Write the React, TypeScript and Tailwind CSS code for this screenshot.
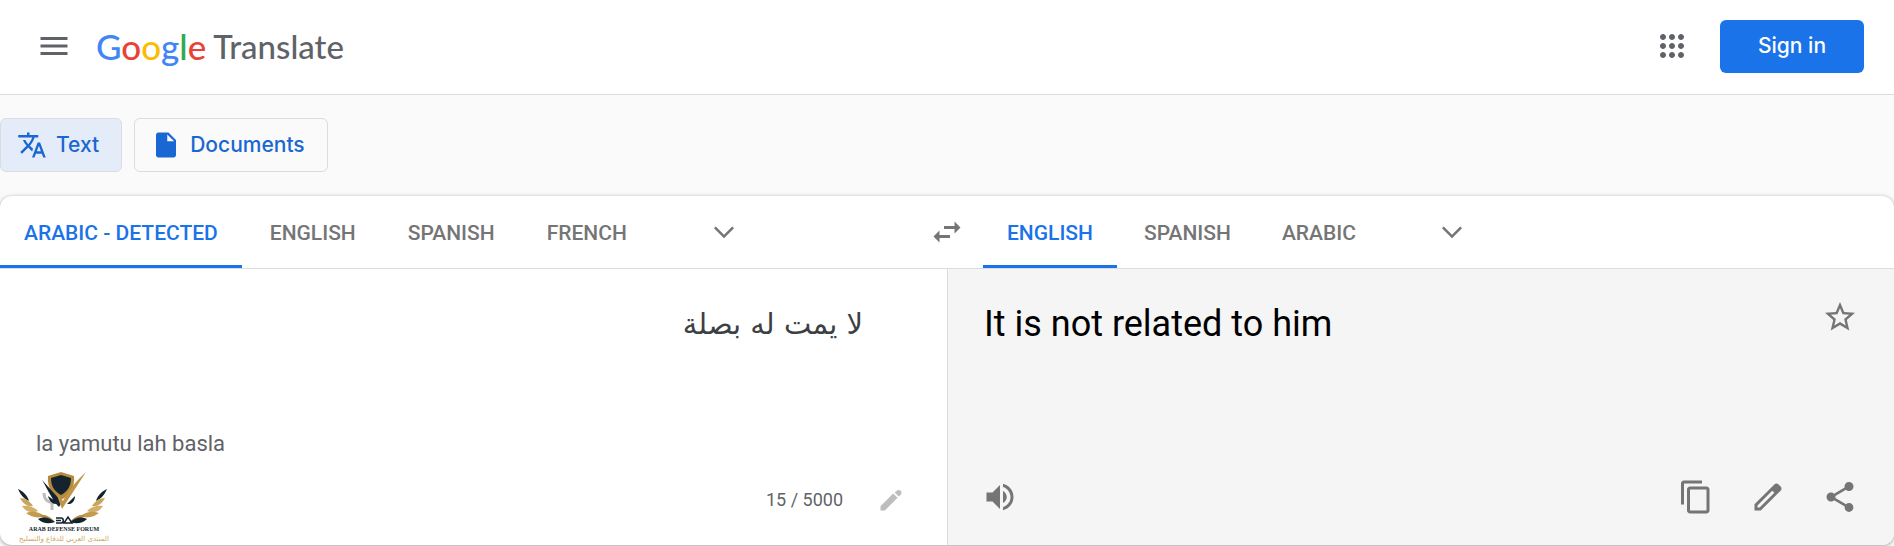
import React from "react";
import clsx from "clsx";

type IconProps = { d: string; className?: string };

const Icon = ({ d, className }: IconProps) => (
  <svg viewBox="0 0 24 24" fill="currentColor" aria-hidden="true" className={clsx("shrink-0", className ?? "size-9")}>
    <path d={d} />
  </svg>
);

const icons = {
  menu: "M3 18h18v-2H3v2zm0-5h18v-2H3v2zm0-7v2h18V6H3z",
  apps: "M6 8c1.1 0 2-.9 2-2s-.9-2-2-2-2 .9-2 2 .9 2 2 2zm6 12c1.1 0 2-.9 2-2s-.9-2-2-2-2 .9-2 2 .9 2 2 2zm-6 0c1.1 0 2-.9 2-2s-.9-2-2-2-2 .9-2 2 .9 2 2 2zm0-6c1.1 0 2-.9 2-2s-.9-2-2-2-2 .9-2 2 .9 2 2 2zm6 0c1.1 0 2-.9 2-2s-.9-2-2-2-2 .9-2 2 .9 2 2 2zm4-8c0 1.1.9 2 2 2s2-.9 2-2-.9-2-2-2-2 .9-2 2zm-4 2c1.1 0 2-.9 2-2s-.9-2-2-2-2 .9-2 2 .9 2 2 2zm6 6c1.1 0 2-.9 2-2s-.9-2-2-2-2 .9-2 2 .9 2 2 2zm0 6c1.1 0 2-.9 2-2s-.9-2-2-2-2 .9-2 2 .9 2 2 2z",
  translate:
    "M12.87 15.07l-2.54-2.51.03-.03c1.74-1.94 2.98-4.17 3.71-6.53H17V4h-7V2H8v2H1v1.99h11.17C11.5 7.92 10.44 9.75 9 11.35 8.07 10.32 7.3 9.19 6.69 8h-2c.73 1.63 1.73 3.17 2.98 4.56l-5.09 5.02L4 19l5-5 3.11 3.11.76-2.04zM18.5 10h-2L12 22h2l1.12-3h4.75L21 22h2l-4.5-12zm-2.62 7l1.62-4.33L19.12 17h-3.24z",
  file: "M6 2c-1.1 0-1.99.9-1.99 2L4 20c0 1.100.89 2 1.990 2H18c1.100 0 2-.9 2-2V8l-6-6H6zm7 7V3.500L18.500 9H13z",
  chevron: "M5.41 7.59L4 9l8 8 8-8-1.410-1.410L12 14.170",
  swap: "M6.990 11L3 15l3.990 4v-3H14v-2H6.990v-3zM21 9l-3.990-4v3H10v2h7.010v3L21 9z",
  star: "M22 9.240l-7.190-.62L12 2 9.190 8.630 2 9.240l5.460 4.730L5.820 21 12 17.270 18.180 21l-1.630-7.030L22 9.240zM12 15.400l-3.760 2.270 1-4.280-3.320-2.880 4.380-.38L12 6.100l1.710 4.040 4.380.38-3.320 2.880 1 4.280L12 15.400z",
  volume:
    "M3 9v6h4l5 5V4L7 9H3zm13.500 3c0-1.770-1.020-3.290-2.500-4.030v8.050c1.480-.73 2.500-2.250 2.500-4.020zM14 3.230v2.060c2.890.86 5 3.540 5 6.710s-2.110 5.850-5 6.710v2.060c4.010-.91 7-4.490 7-8.770s-2.990-7.860-7-8.770z",
  copy: "M16 1H4c-1.100 0-2 .9-2 2v14h2V3h12V1zm3 4H8c-1.100 0-2 .9-2 2v14c0 1.100.9 2 2 2h11c1.100 0 2-.9 2-2V7c0-1.100-.9-2-2-2zm0 16H8V7h11v14z",
  pencil:
    "M20.410 4.940l-1.350-1.350c-.78-.78-2.050-.78-2.830 0L3 16.820V21h4.180L20.410 7.770c.79-.78.79-2.050 0-2.830zM6.410 19.060L5 19v-1.360l9.820-9.820 1.410 1.410-9.820 9.830z",
  keyboardPencil:
    "M3 17.250V21h3.750L17.600 10.150 13.850 6.400 3 17.250zM20.300 7.450c.95-.95.95-2.400 0-3.350-1-1-2.500-1-3.450-.1L15.200 5.600l3.500 3.500 1.600-1.650z",
  share:
    "M18 16.080c-.76 0-1.440.3-1.960.77L8.910 12.700c.05-.23.09-.46.09-.7s-.04-.47-.09-.7l7.050-4.110c.54.5 1.250.81 2.040.81 1.660 0 3-1.340 3-3s-1.340-3-3-3-3 1.340-3 3c0 .24.04.47.09.7L8.040 9.810C7.500 9.310 6.790 9 6 9c-1.660 0-3 1.340-3 3s1.340 3 3 3c.79 0 1.500-.31 2.040-.81l7.120 4.160c-.05.21-.08.43-.08.65 0 1.610 1.310 2.920 2.920 2.920s2.920-1.310 2.920-2.920-1.310-2.920-2.920-2.920z",
};

const IconButton = ({ label, d, className, size }: { label: string; d: string; className?: string; size?: string }) => (
  <button type="button" aria-label={label} className={clsx("flex items-center justify-center", className)}>
    <Icon d={d} className={size} />
  </button>
);

const Tab = ({ children, active }: { children: string; active?: boolean }) => (
  <button
    type="button"
    role="tab"
    aria-selected={!!active}
    className={clsx(
      "h-[72px] border-b-3 px-6 pt-1.5 text-[21px] font-medium whitespace-nowrap",
      active ? "border-[#1a73e8] text-[#1a73e8]" : "border-transparent text-[#757575]"
    )}
  >
    {children}
  </button>
);

const Wing = () => (
  <>
    <path d="M0 17c4 2 9 5 11 12C6 27 2 22 0 17z" fill="#14232e" />
    <path d="M2 26c5 0 10 3 13 8C10 35 5 32 2 26z" fill="#c9a45a" />
    <path d="M4 34c5-1 11 0 16 5C14 42 8 40 4 34z" fill="#d2b069" />
    <path d="M8 41c6-2 12-2 18 3-6 3-13 1-18-3z" fill="#c39b4c" />
    <path d="M22 43c5-1 11 2 15 7-5-1-11-2-15-7z" fill="#b58a3c" />
    <path d="M20 47c6-3 12-1 17 3-6 2-12 2-17-3z" fill="#14232e" />
  </>
);

const ForumBadge = () => (
  <div className="absolute bottom-0 left-[18px] flex w-[92px] flex-col items-center">
    <svg viewBox="0 0 92 54" className="h-[54px] w-full" aria-hidden="true">
      <path d="M26 21c0 13 17 13 17 0M34 31v7" fill="none" stroke="#bdbdbd" strokeWidth="3" />
      <Wing />
      <g transform="translate(89 0) scale(-1 1)">
        <Wing />
      </g>
      <path d="M30 4l13-4 13 4c1 12-4 19-13 24C34 23 29 16 30 4z" fill="#b58a3c" />
      <path d="M33 6l10-3 10 3c0 8-3 13-10 17C36 19 33 14 33 6z" fill="#14232e" />
      <path d="M24 8l20 22-3 5C36 31 30 18 24 8zM30 24l10 7-3 1c-4-1-6-4-7-8zM57 24l-8 8h3c3-1 5-4 5-8z" fill="#14232e" />
      <path d="M68 0C58 9 50 19 45 29l-7-9c2 6 4 12 6 17C52 25 60 12 68 0z" fill="#c09747" />
      <path d="M38 46h5c3 0 3 5 0 5h-5M38 48.500h5M46 51l4-6 4 6z" fill="none" stroke="#14232e" strokeWidth="1.500" />
    </svg>
    <span className="font-['Liberation_Serif',serif] text-[6px] leading-[7px] font-bold whitespace-nowrap text-[#14232e]">
      ARAB DEFENSE FORUM
    </span>
    <span dir="rtl" className="font-['DejaVu_Sans',sans-serif] text-[7px] leading-[12px] whitespace-nowrap text-[#cda75d]">
      المنتدى العربي للدفاع والتسليح
    </span>
  </div>
);

export default function App() {
  return (
    <div className="bg-[#fafafa] pb-px font-[Roboto,sans-serif] text-[#5f6368]">
      <header className="flex items-center border-b border-[#dadce0] bg-white pt-[19px] pr-[30px] pb-[21px] pl-9">
        <IconButton label="Main menu" d={icons.menu} />
        <a href="#" className="ml-6 flex h-[54px] items-center gap-[7px] font-[Lato,sans-serif] text-[33px] leading-9 font-medium">
          <span className="text-[35px] leading-9">
            <span className="text-[#4285f4]">G</span>
            <span className="text-[#ea4335]">o</span>
            <span className="text-[#fbbc04]">o</span>
            <span className="text-[#4285f4]">g</span>
            <span className="text-[#34a853]">l</span>
            <span className="text-[#ea4335]">e</span>
          </span>
          <span>Translate</span>
        </a>
        <IconButton label="Google apps" d={icons.apps} className="mr-[30px] ml-auto" />
        <a
          href="#"
          className="flex h-[53px] w-36 items-center justify-center rounded-md bg-[#1a73e8] font-[Inter,sans-serif] text-[21px] font-medium text-white"
        >
          Sign in
        </a>
      </header>

      <nav className="flex gap-3 pt-[23px] pb-6 font-[Inter,sans-serif] text-[21px] font-medium text-[#1967d2]">
        <button type="button" className="flex h-[54px] items-center gap-[9px] rounded-md border border-[#dadce0] bg-[#e4ebf9] pr-[22px] pl-4">
          <Icon d={icons.translate} className="size-[30px]" />
          Text
        </button>
        <button type="button" className="flex h-[54px] items-center gap-[9px] rounded-md border border-[#dadce0] pr-[22px] pl-4">
          <Icon d={icons.file} className="size-[30px]" />
          Documents
        </button>
      </nav>

      <main className="overflow-hidden rounded-xl bg-white shadow-[0_1px_4px_rgba(0,0,0,0.37)]">
        <div className="flex items-center border-b border-[#dadce0]">
          <div role="tablist" className="flex flex-1 items-center gap-1">
            <Tab active>ARABIC - DETECTED</Tab>
            <Tab>ENGLISH</Tab>
            <Tab>SPANISH</Tab>
            <Tab>FRENCH</Tab>
            <IconButton label="More source languages" d={icons.chevron} className="ml-[51px] h-[54px] w-9 text-[#757575]" size="size-[30px]" />
          </div>
          <IconButton label="Swap languages" d={icons.swap} className="w-[72px] text-[#757575]" />
          <div role="tablist" className="flex flex-1 items-center gap-[3px]">
            <Tab active>ENGLISH</Tab>
            <Tab>SPANISH</Tab>
            <Tab>ARABIC</Tab>
            <IconButton label="More target languages" d={icons.chevron} className="ml-[51px] h-[54px] w-9 text-[#757575]" size="size-[30px]" />
          </div>
        </div>

        <div className="grid grid-cols-2">
          <section className="relative flex flex-col">
            <textarea
              dir="rtl"
              aria-label="Source text"
              rows={1}
              defaultValue="لا يمت له بصلة"
              className="mt-[31px] mr-[84px] ml-9 h-[98px] resize-none overflow-hidden font-['DejaVu_Sans',sans-serif] text-[29px] leading-[48px] text-[#3c4043] outline-none"
            />
            <p className="mt-7 px-9 text-[22px] leading-9">la yamutu lah basla</p>
            <div className="flex h-[83px] items-center justify-end pr-[42px] pb-2">
              <span className="text-lg">15 / 5000</span>
              <IconButton label="Input tools" d={icons.keyboardPencil} className="ml-[34px] text-[#bdbdbd]" size="size-7" />
            </div>
            <ForumBadge />
          </section>

          <section className="flex flex-col justify-between border-l border-[#dadce0] bg-[#f5f5f5] pb-[30px] pl-9 text-[#757575]">
            <div className="flex items-start justify-between pt-[30px] pr-9">
              <p className="pt-px text-[36px] leading-[48px] text-black">It is not related to him</p>
              <IconButton label="Save translation" d={icons.star} />
            </div>
            <div className="flex items-center gap-9 pr-9">
              <IconButton label="Listen" d={icons.volume} className="-ml-[2px] mr-auto" />
              <IconButton label="Copy translation" d={icons.copy} />
              <IconButton label="Suggest an edit" d={icons.pencil} />
              <IconButton label="Share translation" d={icons.share} />
            </div>
          </section>
        </div>
      </main>
    </div>
  );
}
